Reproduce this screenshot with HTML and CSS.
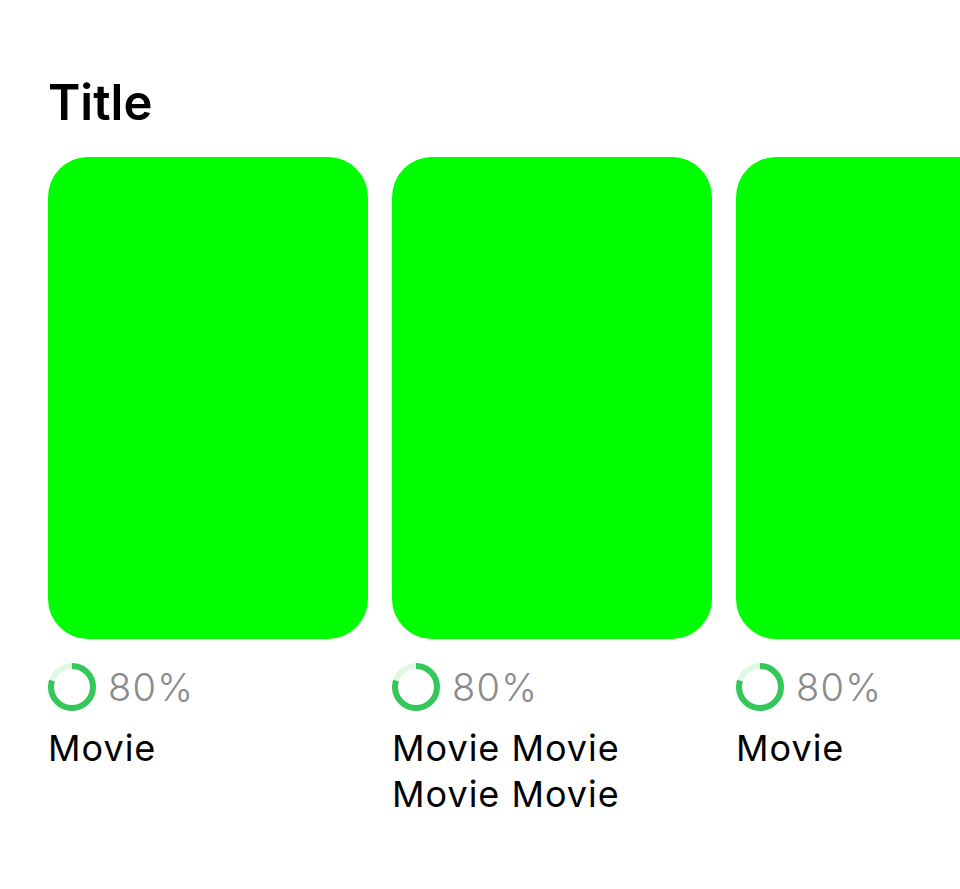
FILE: index.html
```html
<!DOCTYPE html>
<html lang="en">
<head>
    <meta charset="UTF-8">
    <title>Title</title>
    <link rel="stylesheet" href="styles.css">
</head>
<body>
    <div class="section">
        <h1 class="section-title">Title</h1>
        <div class="row">
            <div class="card">
                <div class="poster"></div>
                <div class="score">
                    <svg class="ring" viewBox="0 0 48 48">
                        <circle class="ring-track" cx="24" cy="24" r="21"></circle>
                        <circle class="ring-value" cx="24" cy="24" r="21" pathLength="100" stroke-dasharray="80 100" transform="rotate(-90 24 24)"></circle>
                    </svg>
                    <span class="score-text">80%</span>
                </div>
                <div class="name">Movie</div>
            </div>
            <div class="card">
                <div class="poster"></div>
                <div class="score">
                    <svg class="ring" viewBox="0 0 48 48">
                        <circle class="ring-track" cx="24" cy="24" r="21"></circle>
                        <circle class="ring-value" cx="24" cy="24" r="21" pathLength="100" stroke-dasharray="80 100" transform="rotate(-90 24 24)"></circle>
                    </svg>
                    <span class="score-text">80%</span>
                </div>
                <div class="name">Movie Movie Movie Movie</div>
            </div>
            <div class="card">
                <div class="poster"></div>
                <div class="score">
                    <svg class="ring" viewBox="0 0 48 48">
                        <circle class="ring-track" cx="24" cy="24" r="21"></circle>
                        <circle class="ring-value" cx="24" cy="24" r="21" pathLength="100" stroke-dasharray="80 100" transform="rotate(-90 24 24)"></circle>
                    </svg>
                    <span class="score-text">80%</span>
                </div>
                <div class="name">Movie</div>
            </div>
        </div>
    </div>
</body>
</html>
```

FILE: styles.css
```css
html, body {
    margin: 0;
    height: 889px;
    overflow: hidden;
    background: #fff;
}
body {
    font-family: Inter, "Liberation Sans", sans-serif;
    color: #000;
}
.section {
    padding: 72px 0 0 48px;
}
.section-title {
    margin: 0 0 24px 0;
    font-size: 49px;
    line-height: 61px;
    font-weight: 600;
}
.row {
    display: flex;
    gap: 24px;
}
.card {
    flex: 0 0 320px;
    width: 320px;
}
.poster {
    height: 482px;
    background: #00ff00;
    border-radius: 40px;
}
.score {
    display: flex;
    align-items: center;
    gap: 12px;
    margin-top: 24px;
    height: 48px;
}
.ring {
    width: 48px;
    height: 48px;
}
.ring circle {
    fill: none;
    stroke-width: 6;
}
.ring-track {
    stroke: #e0f7e6;
}
.ring-value {
    stroke: #34c759;
}
.score-text {
    font-size: 38px;
    font-weight: 300;
    letter-spacing: 1.3px;
    color: #8a8a8e;
}
.name {
    margin: 14px 0 0 0;
    font-size: 36px;
    line-height: 46px;
    letter-spacing: 1px;
    width: 240px;
}
```
